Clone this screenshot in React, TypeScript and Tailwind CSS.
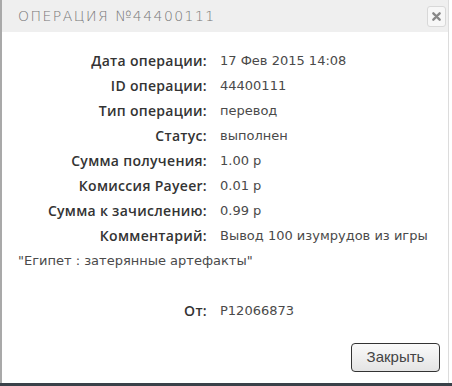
import React from 'react';

const rows: [string, string][] = [
  ['Дата операции:', '17 Фев 2015 14:08'],
  ['ID операции:', '44400111'],
  ['Тип операции:', 'перевод'],
  ['Статус:', 'выполнен'],
  ['Сумма получения:', '1.00 р'],
  ['Комиссия Payeer:', '0.01 р'],
  ['Сумма к зачислению:', '0.99 р'],
  ['Комментарий:', 'Вывод 100 изумрудов из игры'],
];

function Row({ label, value }: { label: string; value: string }) {
  return (
    <div className="flex h-[25px] items-center">
      <div
        className="w-[189px] shrink-0 text-right font-semibold text-[14px] tracking-[0.3px] text-[#333] whitespace-nowrap"
        style={{ fontFamily: '"Open Sans", sans-serif' }}
      >
        {label}
      </div>
      <div className="pl-[13px] text-[13px] text-[#4a4a4a] whitespace-nowrap">{value}</div>
    </div>
  );
}

export default function App() {
  return (
    <div className="w-[452px] h-[386px] bg-white flex flex-col" style={{ fontFamily: '"DejaVu Sans", sans-serif' }}>
      <div className="flex-1 flex flex-col w-[449px] border-l-2 border-l-[#a9a9a9] border-r border-r-[#dcdcdc]">
        <div className="h-[32px] bg-[#efefef] flex items-center justify-between pl-[16px] pr-[2px]">
          <span className="text-[14px] tracking-[1.45px] text-[#777] font-light">ОПЕРАЦИЯ №44400111</span>
          <button className="w-[19px] h-[21px] rounded-[3px] border border-[#d8d8d8] bg-[#f7f7f7] flex items-center justify-center">
            <svg width="9" height="9" viewBox="0 0 10 10">
              <path d="M1.5 1.5 L8.5 8.5 M8.5 1.5 L1.5 8.5" stroke="#888" strokeWidth="2.6" strokeLinecap="round" />
            </svg>
          </button>
        </div>
        <div className="pt-[16px] pl-[16px]">
          {rows.map(([l, v]) => (
            <Row key={l} label={l} value={v} />
          ))}
          <div className="h-[26px] flex items-center text-[13px] text-[#4a4a4a]">
            "Египет : затерянные артефакты"
          </div>
          <div className="h-[24px]" />
          <Row label="От:" value="P12066873" />
        </div>
        <div className="flex-1 flex items-end justify-end pr-[8px] pb-[11px]">
          <button
            className="w-[89px] h-[29px] rounded-[4px] border border-[#333] bg-gradient-to-b from-[#fafafa] to-[#e4e4e4] text-[15px] text-[#444]"
            style={{ fontFamily: '"Liberation Sans", Arial, sans-serif' }}
          >
            Закрыть
          </button>
        </div>
      </div>
      <div className="h-[3px] bg-[#3a4149]" />
    </div>
  );
}
